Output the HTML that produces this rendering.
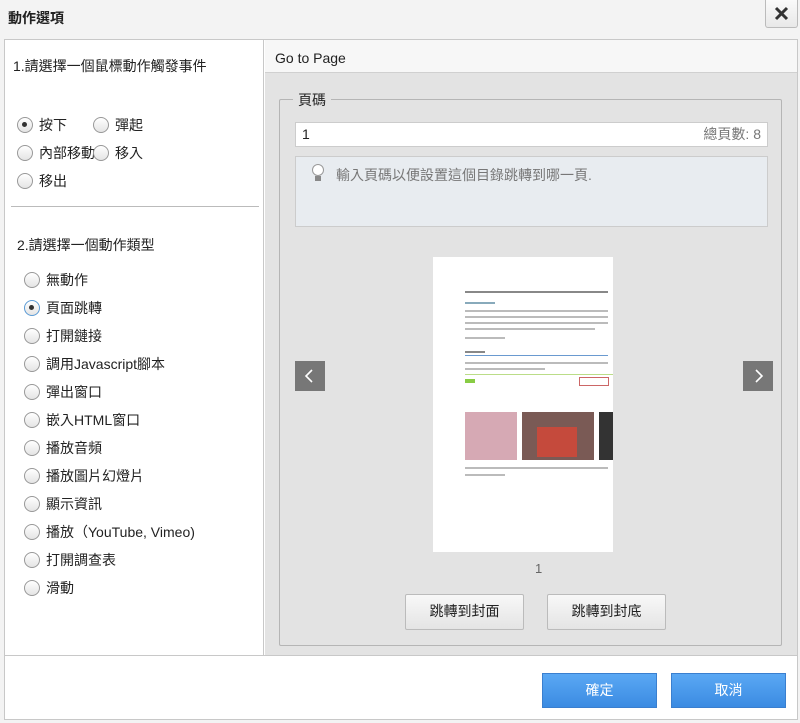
<!DOCTYPE html>
<html><head><meta charset="utf-8"><style>
*{box-sizing:border-box;margin:0;padding:0}
body{width:800px;height:723px;background:#f3f3f3;font-family:"Liberation Sans","Noto Sans CJK TC",sans-serif;position:relative;overflow:hidden;color:#222}
.a{position:absolute}
.title{left:8px;top:8px;font-size:14px;font-weight:bold}
.close{left:765px;top:0;width:33px;height:28px;border:1px solid #bbb;border-top:none;border-radius:0 0 3px 3px;background:linear-gradient(#fafafa,#e8e8e8)}
.main{left:4px;top:39px;width:794px;height:617px;background:#fff;border:1px solid #c8c8c8}
.left{left:0;top:0;width:259px;height:615px;border-right:1px solid #c8c8c8}
.lbl{font-size:14px}
.r{position:absolute;font-size:14px;line-height:18px;padding-left:22px}
.r:before{content:"";position:absolute;left:0;top:1px;width:14px;height:14px;border:1px solid #999;border-radius:50%;background:linear-gradient(#fff,#e4e4e4)}
.r.on:after{content:"";position:absolute;left:5px;top:6px;width:5px;height:5px;border-radius:50%;background:#333}
.r.blue:before{border-color:#5b9bd5}
.right{left:260px;top:0;width:532px;height:615px;background:#e3e3e3}
.hdr{left:0;top:0;width:532px;height:33px;background:#f7f7f7;border-bottom:1px solid #d0d0d0;font-size:14px;padding:10px 0 0 10px}
.fs{left:14px;top:59px;width:503px;height:547px;border:1px solid #b5b5b5;border-radius:2px}
.btn{border:1px solid #bbb;background:linear-gradient(#f8f8f8,#e4e4e4);font-size:14px;text-align:center;line-height:33px;border-radius:2px}
.bb{background:linear-gradient(#5aa8f4,#3b8be2);border:1px solid #3a7fcf;color:#fff;font-size:14px;text-align:center;line-height:33px}
.arr{width:30px;height:30px;background:#777}
.ln{position:absolute;height:2px;background:#bbb}
</style></head><body>
<div class="a title">動作選項</div>
<div class="a close"><svg width="31" height="27"><path d="M10 8 L21 19 M21 8 L10 19" stroke="#333" stroke-width="3"/></svg></div>
<div class="a main">
 <div class="a left">
  <div class="a lbl" style="left:8px;top:16px">1.請選擇一個鼠標動作觸發事件</div>
  <div class="r on" style="left:12px;top:76px">按下</div>
  <div class="r" style="left:88px;top:76px">彈起</div>
  <div class="r" style="left:12px;top:104px">內部移動</div>
  <div class="r" style="left:88px;top:104px">移入</div>
  <div class="r" style="left:12px;top:132px">移出</div>
  <div class="a" style="left:6px;top:166px;width:248px;height:1px;background:#bbb"></div>
  <div class="a lbl" style="left:12px;top:195px">2.請選擇一個動作類型</div>
  <div class="r" style="left:19px;top:231px">無動作</div>
  <div class="r on blue" style="left:19px;top:259px">頁面跳轉</div>
  <div class="r" style="left:19px;top:287px">打開鏈接</div>
  <div class="r" style="left:19px;top:315px">調用Javascript腳本</div>
  <div class="r" style="left:19px;top:343px">彈出窗口</div>
  <div class="r" style="left:19px;top:371px">嵌入HTML窗口</div>
  <div class="r" style="left:19px;top:399px">播放音頻</div>
  <div class="r" style="left:19px;top:427px">播放圖片幻燈片</div>
  <div class="r" style="left:19px;top:455px">顯示資訊</div>
  <div class="r" style="left:19px;top:483px">播放（YouTube, Vimeo)</div>
  <div class="r" style="left:19px;top:511px">打開調查表</div>
  <div class="r" style="left:19px;top:539px">滑動</div>
 </div>
 <div class="a right">
  <div class="a hdr">Go to Page</div>
  <div class="a fs"></div>
  <div class="a" style="left:28px;top:50px;background:#e3e3e3;padding:0 5px;font-size:14px">頁碼</div>
  <div class="a" style="left:30px;top:82px;width:473px;height:25px;background:#fff;border:1px solid #ccc;font-size:14px;line-height:23px;padding:0 6px">1<span style="float:right;color:#777">總頁數: 8</span></div>
  <div class="a" style="left:30px;top:116px;width:473px;height:71px;background:#e8ecf0;border:1px solid #ccc;font-size:14px;color:#777;padding:8px 0 0 40px">輸入頁碼以便設置這個目錄跳轉到哪一頁.</div>
  <svg class="a" style="left:46px;top:124px" width="14" height="20"><circle cx="7" cy="6" r="5.5" fill="#fff" stroke="#999"/><rect x="4" y="12" width="6" height="5" fill="#888"/></svg>
  <div class="a arr" style="left:30px;top:321px"><svg width="30" height="30"><path d="M17 9 L11 15 L17 21" stroke="#fff" stroke-width="1.6" fill="none"/></svg></div>
  <div class="a arr" style="left:478px;top:321px"><svg width="30" height="30"><path d="M13 9 L19 15 L13 21" stroke="#fff" stroke-width="1.6" fill="none"/></svg></div>
  <div class="a" style="left:168px;top:217px;width:180px;height:295px;background:#fff">
   <div class="ln" style="left:32px;top:34px;width:143px;background:#888"></div>
   <div class="ln" style="left:32px;top:45px;width:30px;background:#8ab"></div>
   <div class="ln" style="left:32px;top:53px;width:143px"></div>
   <div class="ln" style="left:32px;top:59px;width:143px"></div>
   <div class="ln" style="left:32px;top:65px;width:143px"></div>
   <div class="ln" style="left:32px;top:71px;width:130px"></div>
   <div class="ln" style="left:32px;top:80px;width:40px"></div>
   <div class="ln" style="left:32px;top:94px;width:20px;background:#888"></div>
   <div class="ln" style="left:32px;top:98px;width:143px;height:1px;background:#6a9ad0"></div>
   <div class="ln" style="left:32px;top:105px;width:143px"></div>
   <div class="ln" style="left:32px;top:111px;width:80px"></div>
   <div class="ln" style="left:32px;top:117px;width:148px;height:1px;background:#bd8"></div>
   <div class="ln" style="left:32px;top:122px;width:10px;height:4px;background:#8c4"></div>
   <div class="ln" style="left:146px;top:120px;width:30px;height:9px;border:1px solid #c66;background:#fff"></div>
   <div class="a" style="left:32px;top:155px;width:52px;height:48px;background:#d6a9b4"></div>
   <div class="a" style="left:89px;top:155px;width:72px;height:48px;background:#7a5a55"></div>
   <div class="a" style="left:104px;top:170px;width:40px;height:30px;background:#c54a3c"></div>
   <div class="a" style="left:166px;top:155px;width:14px;height:48px;background:#333"></div>
   <div class="ln" style="left:32px;top:210px;width:143px"></div>
   <div class="ln" style="left:32px;top:217px;width:40px"></div>
  </div>
  <div class="a" style="left:270px;top:521px;font-size:13px;color:#666">1</div>
  <div class="a btn" style="left:140px;top:554px;width:119px;height:36px">跳轉到封面</div>
  <div class="a btn" style="left:282px;top:554px;width:119px;height:36px">跳轉到封底</div>
 </div>
</div>
<div class="a" style="left:4px;top:656px;width:794px;height:64px;background:#fff;border:1px solid #c8c8c8;border-top:none"></div>
<div class="a bb" style="left:542px;top:673px;width:115px;height:35px">確定</div>
<div class="a bb" style="left:671px;top:673px;width:115px;height:35px">取消</div>
</body></html>
